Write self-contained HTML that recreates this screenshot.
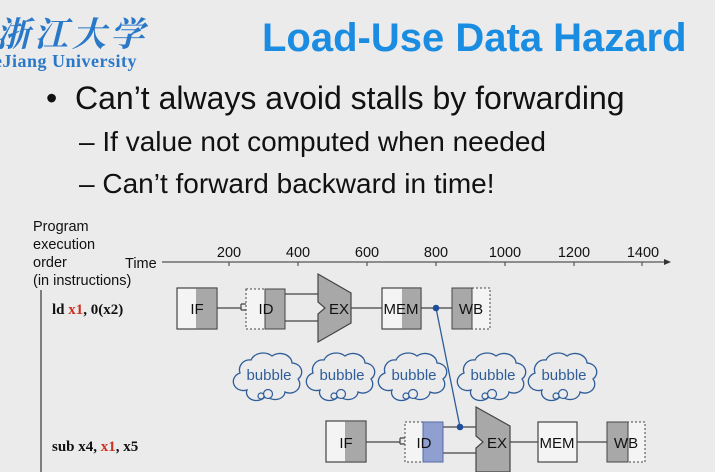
<!DOCTYPE html>
<html><head><meta charset="utf-8"><style>
html,body{margin:0;padding:0}
body{width:715px;height:472px;background:#ebebeb;position:relative;overflow:hidden;font-family:"Liberation Sans",Arial,sans-serif}
.a{position:absolute;white-space:nowrap}
</style></head><body>
<div class="a" style="left:-4px;top:12px;font-family:'Noto Serif CJK SC','WenQuanYi Zen Hei',serif;font-size:34px;color:#2a78c8;font-style:italic;letter-spacing:4px;line-height:40px;font-weight:bold">浙江大学</div>
<div class="a" style="left:-6px;top:51px;font-family:'Liberation Serif',serif;font-weight:bold;font-size:18px;color:#2a78c8;line-height:20px;letter-spacing:0.5px">eJiang University</div>
<div class="a" style="left:262px;top:15px;font-size:40px;font-weight:bold;color:#1a8ce2;line-height:46px">Load-Use Data Hazard</div>
<div class="a" style="left:46px;top:80px;font-size:32px;color:#111;line-height:37px">•&nbsp;&nbsp;Can’t always avoid stalls by forwarding</div>
<div class="a" style="left:79px;top:125px;font-size:28px;color:#111;line-height:33px">– If value not computed when needed</div>
<div class="a" style="left:79px;top:167px;font-size:28px;color:#111;line-height:33px">– Can’t forward backward in time!</div>
<svg class="a" style="left:0;top:0" width="715" height="472" viewBox="0 0 715 472" font-family="Liberation Sans,Arial,sans-serif">
<defs>
<g id="cl">
<path d="M6,21 A10,10 0 0 1 17,8 A13,11 0 0 1 38,4 A12,10 0 0 1 58,11 A10,9 0 0 1 64,27 A10,9 0 0 1 51,40 A10,8 0 0 1 32,43 A10,8 0 0 1 13,38 A9,8 0 0 1 6,21 Z" fill="none" stroke="#2f5d9a" stroke-width="1.3"/>
<circle cx="34" cy="42" r="4.5" fill="#ebebeb" stroke="#2f5d9a" stroke-width="1.2"/>
<circle cx="27" cy="44" r="3" fill="#ebebeb" stroke="#2f5d9a" stroke-width="1.2"/>
<text x="35" y="28" text-anchor="middle" font-size="15" fill="#2f5d9a">bubble</text>
</g>
</defs>
<g font-size="14.5" fill="#111">
<text x="33" y="231">Program</text>
<text x="33" y="249">execution</text>
<text x="33" y="267">order</text>
<text x="33" y="285">(in instructions)</text>
<text x="125" y="268">Time</text>
<text x="229" y="257" text-anchor="middle">200</text>
<text x="298" y="257" text-anchor="middle">400</text>
<text x="367" y="257" text-anchor="middle">600</text>
<text x="436" y="257" text-anchor="middle">800</text>
<text x="505" y="257" text-anchor="middle">1000</text>
<text x="574" y="257" text-anchor="middle">1200</text>
<text x="643" y="257" text-anchor="middle">1400</text>
</g>
<line x1="162" y1="262" x2="666" y2="262" stroke="#555" stroke-width="1.3"/>
<path d="M664,259 L671,262 L664,265Z" fill="#333"/>
<g stroke="#555" stroke-width="1.2">
<line x1="229" y1="262" x2="229" y2="266"/><line x1="298" y1="262" x2="298" y2="266"/><line x1="367" y1="262" x2="367" y2="266"/><line x1="436" y1="262" x2="436" y2="266"/><line x1="505" y1="262" x2="505" y2="266"/><line x1="574" y1="262" x2="574" y2="266"/><line x1="642" y1="262" x2="642" y2="266"/>
</g>
<line x1="41" y1="290" x2="41" y2="472" stroke="#444" stroke-width="1.3"/>
<text x="52" y="314" font-family="Liberation Serif,serif" font-weight="bold" font-size="15" fill="#111">ld <tspan fill="#d03020">x1</tspan>, 0(x2)</text>
<text x="52" y="451" font-family="Liberation Serif,serif" font-weight="bold" font-size="15" fill="#111">sub x4, <tspan fill="#d03020">x1</tspan>, x5</text>
<g stroke="#444" stroke-width="1.2">
<line x1="217" y1="308" x2="241" y2="308"/>
<path d="M241,304 h5 M241,304 v6 M241,310 h5" fill="none"/>
<line x1="285" y1="294" x2="318" y2="294"/><line x1="285" y1="321" x2="318" y2="321"/>
<line x1="351" y1="308" x2="382" y2="308"/>
<line x1="421" y1="308" x2="452" y2="308"/>
</g>
<rect x="177" y="288" width="40" height="41" fill="#f4f4f4" stroke="#444" stroke-width="1.2"/>
<rect x="196" y="288.6" width="20.4" height="39.8" fill="#a8a8a8"/>
<rect x="246" y="289" width="39" height="40" fill="#f4f4f4" stroke="#444" stroke-width="1" stroke-dasharray="2,2"/>
<rect x="265" y="289" width="20" height="40" fill="#a8a8a8" stroke="#444" stroke-width="1"/>
<path d="M318,274 L351,293 L351,323 L318,342 L318,314 L325,308 L318,302 Z" fill="#a8a8a8" stroke="#444" stroke-width="1.2"/>
<rect x="382" y="288" width="39" height="41" fill="#f4f4f4" stroke="#444" stroke-width="1.2"/>
<rect x="402" y="288.6" width="18.4" height="39.8" fill="#a8a8a8"/>
<rect x="452" y="288" width="38" height="41" fill="#f4f4f4" stroke="#444" stroke-width="1" stroke-dasharray="2,2"/>
<rect x="452" y="288" width="20" height="41" fill="#a8a8a8" stroke="#444" stroke-width="1"/>
<g font-size="15" fill="#111" text-anchor="middle">
<text x="197" y="314">IF</text><text x="266" y="314">ID</text><text x="339" y="314">EX</text><text x="401" y="314">MEM</text><text x="471" y="314">WB</text>
</g>
<use href="#cl" x="234" y="352"/>
<use href="#cl" x="307" y="352"/>
<use href="#cl" x="379" y="352"/>
<use href="#cl" x="458" y="352"/>
<use href="#cl" x="529" y="352"/>
<g stroke="#444" stroke-width="1.2">
<line x1="366" y1="442" x2="400" y2="442"/>
<path d="M400,438 h5 M400,438 v6 M400,444 h5" fill="none"/>
<line x1="443" y1="427" x2="476" y2="427"/><line x1="443" y1="453" x2="476" y2="453"/>
<line x1="510" y1="442" x2="538" y2="442"/>
<line x1="577" y1="442" x2="607" y2="442"/>
</g>
<rect x="326" y="421" width="40" height="41" fill="#f4f4f4" stroke="#444" stroke-width="1.2"/>
<rect x="345" y="421.6" width="20.4" height="39.8" fill="#a8a8a8"/>
<rect x="405" y="422" width="38" height="40" fill="#f4f4f4" stroke="#444" stroke-width="1" stroke-dasharray="2,2"/>
<rect x="423" y="422" width="20" height="40" fill="#8f9fd0" stroke="#5a6aa8" stroke-width="1"/>
<path d="M476,407 L510,426 L510,472 L476,472 L476,448 L483,442 L476,436 Z" fill="#a8a8a8" stroke="#444" stroke-width="1.2"/>
<rect x="538" y="422" width="39" height="40" fill="#f4f4f4" stroke="#444" stroke-width="1.2"/>
<rect x="607" y="422" width="38" height="40" fill="#f4f4f4" stroke="#444" stroke-width="1" stroke-dasharray="2,2"/>
<rect x="607" y="422" width="21" height="40" fill="#a8a8a8" stroke="#444" stroke-width="1"/>
<g font-size="15" fill="#111" text-anchor="middle">
<text x="346" y="448">IF</text><text x="424" y="448">ID</text><text x="497" y="448">EX</text><text x="557" y="448">MEM</text><text x="626" y="448">WB</text>
</g>
<line x1="436" y1="308" x2="460" y2="427" stroke="#2f5d9a" stroke-width="1.3"/>
<circle cx="436" cy="308" r="3.3" fill="#1f4f9a"/>
<circle cx="460" cy="427" r="3.3" fill="#1f4f9a"/>
</svg>
</body></html>
